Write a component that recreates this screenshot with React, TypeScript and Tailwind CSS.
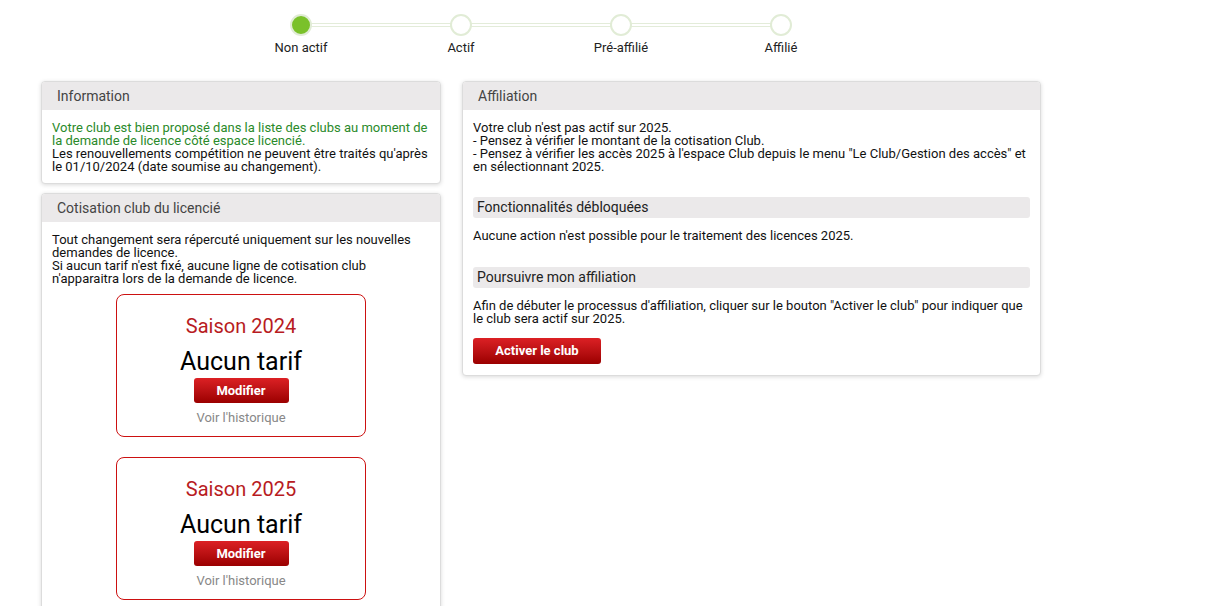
import React from "react";

const steps = ["Non actif", "Actif", "Pré-affilié", "Affilié"];

function Stepper() {
  return (
    <div className="ml-[41px] flex w-[1000px] justify-center pt-[14px]">
      <div className="relative w-[640px]">
        <div className="absolute left-[80px] right-[80px] top-[9px] h-[4px] border-y border-[#e3ecd9] bg-white" />
        <div className="relative flex">
          {steps.map((s, i) => (
            <div key={s} className="flex w-[160px] flex-col items-center">
              <div
                className={`h-[22px] w-[22px] rounded-full border-2 border-[#e1ecd6] ${
                  i === 0 ? "bg-[#7ac12a]" : "bg-white"
                }`}
              />
              <div className="mt-[4px] text-[13px] leading-[16px] text-[#222]">{s}</div>
            </div>
          ))}
        </div>
      </div>
    </div>
  );
}

function Panel({ title, children, className = "" }: { title: string; children: React.ReactNode; className?: string }) {
  return (
    <div className={`overflow-hidden rounded-[4px] border border-[#dcdcdc] bg-white shadow-[0_1px_4px_rgba(0,0,0,0.15)] ${className}`}>
      <div className="h-[28px] bg-[#ebe9ea] pl-[15px] text-[14px] leading-[28px] text-[#444]">{title}</div>
      {children}
    </div>
  );
}

function RedButton({ label, className = "" }: { label: string; className?: string }) {
  return (
    <button className={`rounded-[3px] bg-gradient-to-b from-[#dc2024] to-[#9b0000] text-[13px] font-bold text-white ${className}`}>
      {label}
    </button>
  );
}

function SeasonCard({ year }: { year: string }) {
  return (
    <div className="mx-auto flex h-[143px] w-[250px] flex-col items-center rounded-[8px] border border-[#cc1111] bg-white pt-[20px]">
      <div className="text-[20px] leading-[22px] text-[#b81b22]">Saison {year}</div>
      <div className="mt-[12px] text-[25px] leading-[26px] text-black">Aucun tarif</div>
      <RedButton label="Modifier" className="mt-[3px] h-[25px] w-[95px] leading-[25px]" />
      <div className="mt-[7px] text-[13px] leading-[16px] text-[#888]">Voir l'historique</div>
    </div>
  );
}

export default function App() {
  return (
    <div className="min-h-[606px] bg-white font-['Roboto',sans-serif] text-[13px] leading-[13px] text-[#111]">
      <Stepper />
      <div className="mt-[25px] flex items-start gap-[21px] pl-[41px]">
        <div className="flex w-[400px] flex-col gap-[9px]">
          <Panel title="Information">
            <div className="px-[10px] pb-[10px] pt-[11px]">
              <div className="text-[#2a8a2a]">
                Votre club est bien proposé dans la liste des clubs au moment de la demande de licence côté espace licencié.
              </div>
              <div>Les renouvellements compétition ne peuvent être traités qu'après le 01/10/2024 (date soumise au changement).</div>
            </div>
          </Panel>
          <Panel title="Cotisation club du licencié">
            <div className="px-[10px] pt-[11px]">
              <div>Tout changement sera répercuté uniquement sur les nouvelles demandes de licence.</div>
              <div>Si aucun tarif n'est fixé, aucune ligne de cotisation club n'apparaitra lors de la demande de licence.</div>
            </div>
            <div className="flex flex-col gap-[20px] pb-[20px] pt-[9px]">
              <SeasonCard year="2024" />
              <SeasonCard year="2025" />
            </div>
          </Panel>
        </div>
        <Panel title="Affiliation" className="w-[579px]">
          <div className="px-[10px] pb-[11px] pt-[11px]">
            <div>Votre club n'est pas actif sur 2025.</div>
            <div>- Pensez à vérifier le montant de la cotisation Club.</div>
            <div>
              - Pensez à vérifier les accès 2025 à l'espace Club depuis le menu "Le Club/Gestion des accès" et en sélectionnant 2025.
            </div>
            <div className="mt-[24px] h-[21px] rounded-[3px] bg-[#ebe9ea] pl-[4px] text-[14px] leading-[21px] text-[#222]">
              Fonctionnalités débloquées
            </div>
            <div className="mt-[11px]">Aucune action n'est possible pour le traitement des licences 2025.</div>
            <div className="mt-[25px] h-[21px] rounded-[3px] bg-[#ebe9ea] pl-[4px] text-[14px] leading-[21px] text-[#222]">
              Poursuivre mon affiliation
            </div>
            <div className="mt-[11px]">
              Afin de débuter le processus d'affiliation, cliquer sur le bouton "Activer le club" pour indiquer que le club sera actif sur 2025.
            </div>
            <RedButton label="Activer le club" className="mt-[13px] h-[26px] w-[128px] leading-[26px]" />
          </div>
        </Panel>
      </div>
    </div>
  );
}
